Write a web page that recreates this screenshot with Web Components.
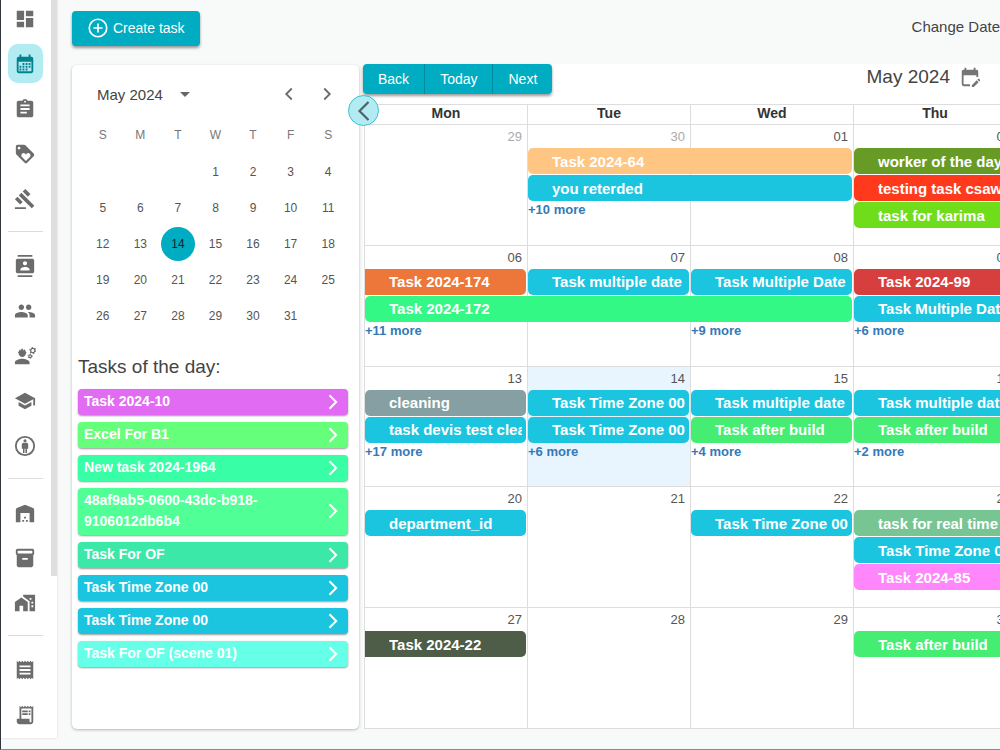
<!DOCTYPE html>
<html lang="en">
<head>
<meta charset="utf-8">
<title>Tasks calendar</title>
<style>
html, body { margin: 0; height: 100%; }
body { font-family: "Liberation Sans", Arial, sans-serif; color: #444; background: #f8fafa; overflow: hidden; }
</style>
</head>
<body>
<app-shell>
  <side-nav slot="nav"></side-nav>
  <top-bar slot="top"></top-bar>
  <day-panel slot="panel"></day-panel>
  <month-calendar slot="calendar"></month-calendar>
</app-shell>

<script>
const define = (name, html, setup) => {
  const tpl = document.createElement('template');
  tpl.innerHTML = '<style>*{box-sizing:border-box}button{font:inherit;color:inherit;background:none;border:0;padding:0;cursor:pointer}</style>' + html;
  customElements.define(name, class extends HTMLElement {
    constructor() {
      super();
      this.attachShadow({ mode: 'open' }).append(tpl.content.cloneNode(true));
    }
    connectedCallback() {
      if (setup && !this.ready) { this.ready = true; setup(this, this.shadowRoot); }
    }
  });
};

const ICONS = {
  dashboard: '<path d="M3 13h8V3H3v10zm0 8h8v-6H3v6zm10 0h8V11h-8v10zm0-18v6h8V3h-8z"/>',
  calendar: '<path fill-rule="evenodd" d="M19 4h-1V1.500h-2V4H8V1.500H6V4H5a2 2 0 0 0-2 2v14a2 2 0 0 0 2 2h14a2 2 0 0 0 2-2V6a2 2 0 0 0-2-2zm0 16H5V9.500h14z"/><path d="M9.300 11h2v2h-2zM12.700 11h2v2h-2zM16 11h2v2h-2zM6 14h2v2H6zM9.300 14h2v2h-2zM12.700 14h2v2h-2zM16 14h2v2h-2zM6 17h2v2H6zM9.300 17h2v2h-2zM12.700 17h2v2h-2z"/>',
  assignment: '<path d="M19 3h-4.180C14.400 1.840 13.300 1 12 1c-1.300 0-2.400.840-2.820 2H5c-1.100 0-2 .900-2 2v14c0 1.100.900 2 2 2h14c1.100 0 2-.900 2-2V5c0-1.100-.900-2-2-2zm-7 0c.550 0 1 .450 1 1s-.450 1-1 1-1-.450-1-1 .450-1 1-1zm2 14H7v-2h7v2zm3-4H7v-2h10v2zm0-4H7V7h10v2z"/>',
  loyalty: '<path d="m21.410 11.580-9-9C12.050 2.220 11.550 2 11 2H4c-1.100 0-2 .900-2 2v7c0 .550.220 1.050.590 1.420l9 9c.360.360.860.580 1.410.580.550 0 1.050-.220 1.410-.590l7-7c.370-.360.590-.860.590-1.410 0-.550-.230-1.060-.590-1.420zM5.500 7C4.670 7 4 6.330 4 5.500S4.670 4 5.500 4 7 4.670 7 5.500 6.330 7 5.500 7zm11.770 8.270L13 19.540l-4.270-4.270C8.280 14.810 8 14.190 8 13.500c0-1.380 1.120-2.500 2.500-2.500.690 0 1.320.280 1.770.740l.730.720.730-.730c.450-.450 1.080-.730 1.770-.730 1.380 0 2.500 1.120 2.500 2.500 0 .690-.280 1.320-.730 1.770z"/>',
  gavel: '<path d="M1 21h12v2H1zM5.245 8.070l2.830-2.827 14.140 14.142-2.828 2.828zM12.317 1l5.657 5.656-2.830 2.830-5.654-5.660zM3.825 9.485l5.657 5.657-2.828 2.828-5.657-5.657z"/>',
  contacts: '<path d="M20 0H4v2h16V0zM4 24h16v-2H4v2zM20 4H4c-1.100 0-2 .900-2 2v12c0 1.100.900 2 2 2h16c1.100 0 2-.900 2-2V6c0-1.100-.900-2-2-2zm-8 2.750c1.240 0 2.250 1.010 2.250 2.250s-1.010 2.250-2.250 2.250S9.750 10.240 9.750 9 10.760 6.750 12 6.750zM17 17H7v-1.500c0-1.670 3.330-2.500 5-2.500s5 .830 5 2.500V17z"/>',
  group: '<path d="M16 11c1.660 0 2.990-1.340 2.990-3S17.660 5 16 5c-1.660 0-3 1.340-3 3s1.340 3 3 3zm-8 0c1.660 0 2.990-1.340 2.990-3S9.660 5 8 5C6.340 5 5 6.340 5 8s1.340 3 3 3zm0 2c-2.330 0-7 1.170-7 3.500V19h14v-2.500c0-2.330-4.670-3.500-7-3.500zm8 0c-.290 0-.620.020-.970.050 1.160.840 1.970 1.970 1.970 3.450V19h6v-2.500c0-2.330-4.670-3.500-7-3.500z"/>',
  engineering: '<path d="M9 15c-2.670 0-8 1.340-8 4v2h16v-2c0-2.660-5.330-4-8-4zM4.740 9H5c0 2.210 1.790 4 4 4s4-1.790 4-4h.260c.270 0 .490-.220.490-.500s-.220-.500-.490-.500H13c0-1.480-.810-2.750-2-3.450v.950c0 .280-.220.500-.500.500s-.500-.220-.500-.500V4.140a4 4 0 0 0-2 0V5.500c0 .280-.220.500-.500.500S7 5.780 7 5.500v-.950C5.810 5.250 5 6.520 5 8h-.260c-.270 0-.490.220-.490.500s.220.500.490.500z"/><g fill="none" stroke="currentColor"><circle cx="20.500" cy="6" r="2.300" stroke-width="1.300"/><circle cx="20.500" cy="6" r="3.300" stroke-width="1.200" stroke-dasharray="1.500 1.950"/><circle cx="17.600" cy="12.300" r="1.500" stroke-width="1.200"/><circle cx="17.600" cy="12.300" r="2.300" stroke-width=".900" stroke-dasharray="1.100 1.300"/></g>',
  school: '<path d="M5 13.180v4L12 21l7-3.820v-4L12 17l-7-3.820zM12 3 1 9l11 6 9-4.910V17h2V9L12 3z"/>',
  person: '<circle cx="12" cy="12" r="10" fill="none" stroke="currentColor" stroke-width="2"/><circle cx="12" cy="6.200" r="1.700"/><path d="M9.500 8.500h5l1 1.500v5h-1.300v4.500h-1.700V15h-1v4.500H9.800V15H8.500v-5z"/>',
  warehouse: '<path fill-rule="evenodd" d="M2 22V8.350c0-.820.500-1.550 1.260-1.860l8-3.200a2 2 0 0 1 1.480 0l8 3.200C21.500 6.800 22 7.530 22 8.350V22h-5V12H7v10z"/><path d="M11 16h2v2h-2zM9 19.500h2v2H9zM13 19.500h2v2h-2z"/>',
  inventory: '<path d="M20 2H4c-1 0-2 .900-2 2v3.010c0 .720.430 1.340 1 1.690V20c0 1.100 1.100 2 2 2h14c.900 0 2-.900 2-2V8.700c.570-.350 1-.970 1-1.690V4c0-1.100-1-2-2-2zm-5 12H9v-2h6v2zm5-7H4V4h16v3z"/>',
  homework: '<path fill-rule="evenodd" d="M1 11v10h5v-6h4v6h5V11L8 6zM10 3v2l7 5v11h6V3zM17 6.500h2v2h-2zM19 10.500h2v2h-2zM19 14.500h2v2h-2z"/>',
  receipt: '<path d="M18 17H6v-2h12v2zm0-4H6v-2h12v2zm0-4H6V7h12v2zM3 22l1.500-1.500L6 22l1.500-1.500L9 22l1.500-1.500L12 22l1.500-1.500L15 22l1.500-1.500L18 22l1.500-1.500L21 22V2l-1.500 1.500L18 2l-1.500 1.500L15 2l-1.500 1.500L12 2l-1.500 1.500L9 2 7.500 3.500 6 2 4.500 3.500 3 2v20z"/>',
  receiptLong: '<path d="M19.500 3.500 18 2l-1.500 1.500L15 2l-1.500 1.500L12 2l-1.500 1.500L9 2 7.500 3.500 6 2v14H3v3c0 1.660 1.340 3 3 3h12c1.660 0 3-1.340 3-3V2l-1.500 1.500zM19 19c0 .550-.450 1-1 1s-1-.450-1-1v-3H8V5h11v14zM9 7h6v2H9zM16 7h2v2h-2zM9 10h6v2H9zM16 10h2v2h-2z"/>',
  editCalendar: '<path d="M12 22H5a2 2 0 0 1-2-2L3.010 6c0-1.100.880-2 1.990-2h1V2h2v2h8V2h2v2h1c1.100 0 2 .900 2 2v6h-2v-2H5v10h7v2zm10.130-5.010.710-.710c.390-.390.390-1.020 0-1.410l-.710-.710a1 1 0 0 0-1.410 0l-.710.710 2.120 2.120zm-.710.710-5.300 5.300H14v-2.120l5.300-5.300 2.120 2.120z"/>',
  plusCircle: '<g fill="none" stroke="currentColor" stroke-width="2"><circle cx="12" cy="12" r="10.500"/><path d="M12 6.500v11M6.500 12h11"/></g>',
  left: '<path fill="none" stroke="currentColor" stroke-width="2" d="m15 6-6 6 6 6"/>',
  right: '<path fill="none" stroke="currentColor" stroke-width="2" d="m9 6 6 6-6 6"/>',
  bigLeft: '<path fill="none" stroke="currentColor" stroke-width="2.200" d="m16.500 3-9 9 9 9"/>',
  bigRight: '<path fill="none" stroke="currentColor" stroke-width="2.500" d="m9 4 8 8-8 8"/>',
  down: '<path d="m7 10 5 5 5-5z"/>'
};

/* ui-icon: name picks the glyph, --size sets its box */
define('ui-icon', '<style>:host{display:block;flex:none;width:var(--size,24px);height:var(--size,24px)}svg{display:block;width:100%;height:100%;fill:currentColor}</style><svg viewBox="0 0 24 24" aria-hidden="true"></svg>',
  (el, root) => { root.querySelector('svg').innerHTML = ICONS[el.getAttribute('name')]; });

define('app-shell', `<style>
:host{display:grid;grid-template-columns:auto minmax(0,1fr);height:100vh;box-sizing:border-box;border-left:1px solid #30353b;border-bottom:1px solid #858b8e;overflow:hidden}
main{display:grid;grid-template-rows:64px minmax(0,1fr);min-width:0;padding:0 0 20px 15px}
section{display:grid;grid-template-columns:287px minmax(0,1fr);gap:4px;min-height:0}
</style><slot name="nav"></slot><main><slot name="top"></slot><section><slot name="panel"></slot><slot name="calendar"></slot></section></main>`);

define('nav-item', `<style>
:host{display:block}
a{display:flex;align-items:center;justify-content:center;width:35px;height:39px;padding-right:2px;border-radius:10px;color:#6c6c6c}
:host([active]) a{background:#b2ebf2;color:#00838f}
ui-icon{--size:22px}
</style><a href="#"></a>`, (el, root) => {
  const name = el.getAttribute('icon'), link = root.querySelector('a');
  link.innerHTML = `<ui-icon name="${name}"></ui-icon>`;
  link.setAttribute('aria-label', name);
});

define('side-nav', `<style>
:host{display:flex;width:56px;margin-bottom:11px;background:#fff;box-shadow:0 0 2px #ccc;overflow:hidden}
nav{flex:1;display:flex;flex-direction:column;gap:6px;margin-top:-1px;padding-left:7px}
hr{width:35px;height:1px;margin:7px 0 8px;border:0;background:#dcdcdc;flex:none}
i{width:6px;height:78%;background:#dedede}
</style><nav></nav><i></i>`, (el, root) => {
  const groups = [['dashboard', 'calendar', 'assignment', 'loyalty', 'gavel'], ['contacts', 'group', 'engineering', 'school', 'person'], ['warehouse', 'inventory', 'homework'], ['receipt', 'receiptLong']];
  root.querySelector('nav').innerHTML = groups.map(g => g.map(n => `<nav-item icon="${n}"${n === 'calendar' ? ' active' : ''}></nav-item>`).join('')).join('<hr>');
});

define('top-bar', `<style>
:host{display:flex;justify-content:space-between;align-items:flex-start;padding-top:11px}
button{display:flex;align-items:center;gap:5px;height:35px;padding:0 15px 1px 16px;border-radius:4px;background:#00acc1;color:#fff;font-size:14px;box-shadow:0 2px 3px #0006}
ui-icon{--size:20px}
span{font-size:15px;line-height:32px;white-space:nowrap}
</style><button><ui-icon name="plusCircle"></ui-icon>Create task</button><span>Change Date</span>`);

define('mini-calendar', `<style>
:host{display:block;padding:0 6px}
header{display:flex;align-items:center;height:58px;padding:0 1px 0 13px;font-size:15px;color:#444}
.month{display:flex;align-items:center;gap:10px;margin-right:auto}
.arrow{width:38px;display:flex;justify-content:center;color:#6c6c6c}
.arrow ui-icon{--size:22px}
table{width:100%;table-layout:fixed;border-collapse:collapse;font-size:12px}
th{height:31px;padding:0 0 7px;font-weight:400;color:#777}
td{height:36px;padding:0;text-align:center;color:#555}
td button{width:34px;height:34px;border-radius:50%}
td button[aria-current]{background:#00acc1;color:#123}
.month ui-icon{color:#666}
</style><header><button class="month">May 2024<ui-icon name="down"></ui-icon></button><button class="arrow" aria-label="Previous month"><ui-icon name="left"></ui-icon></button><button class="arrow" aria-label="Next month"><ui-icon name="right"></ui-icon></button></header><table><thead><tr></tr></thead><tbody></tbody></table>`, (el, root) => {
  root.querySelector('thead tr').innerHTML = [...'SMTWTFS'].map(d => `<th scope="col">${d}</th>`).join('');
  let html = '';
  for (let w = 0; w < 5; w++) {
    html += '<tr>';
    for (let d = 0; d < 7; d++) {
      const n = w * 7 + d - 2;
      html += '<td>' + (n > 0 && n < 32 ? `<button${n === 14 ? ' aria-current="date"' : ''}>${n}</button>` : '') + '</td>';
    }
    html += '</tr>';
  }
  root.querySelector('tbody').innerHTML = html;
});

define('task-row', `<style>
:host{display:block}
button{display:flex;align-items:center;justify-content:space-between;width:100%;padding:2px 6px 3px;border-radius:4px;background:var(--c);color:#fff;font-size:14px;font-weight:700;line-height:21px;text-align:left;box-shadow:0 1px 2px #0006}
span{max-width:200px}
ui-icon{--size:20px}
</style><button><span><slot></slot></span><ui-icon name="bigRight"></ui-icon></button>`);

define('day-panel', `<style>
:host{display:flex;flex-direction:column;margin-top:1px;padding:0 6px;background:#fff;border-radius:5px;box-shadow:0 1px 3px #0004}
h2{margin:19px 0 8px;font-size:19px;line-height:28px;font-weight:400;color:#444}
div{display:flex;flex-direction:column;gap:7px;padding-right:5px}
</style><mini-calendar></mini-calendar><h2>Tasks of the day:</h2><div></div>`, (el, root) => {
  root.querySelector('div').innerHTML = [['Task 2024-10', '#e26bf3'], ['Excel For B1', '#66ff7c'], ['New task 2024-1964', '#38ffa5'], ['48af9ab5-0600-43dc-b918-9106012db6b4', '#50ff96'], ['Task For OF', '#3ce8a8'], ['Task Time Zone 00', '#1bc5df'], ['Task Time Zone 00', '#1bc5df'], ['Task For OF (scene 01)', '#66ffe8']]
    .map(([t, c]) => `<task-row style="--c:${c}">${t}</task-row>`).join('');
});

define('cal-event', `<style>
:host{display:block;min-width:0;margin:0 1px}
button{display:block;width:100%;height:26px;padding:0 4px 0 24px;border-radius:5px;background:var(--c);color:#fff;font-size:15px;font-weight:700;line-height:25px;text-align:left}
:host([continued]) button{border-radius:0 5px 5px 0}
span{display:block;overflow:hidden;white-space:nowrap}
</style><button><span><slot></slot></span></button>`);

define('cal-week', `<style>
:host{flex:1;display:grid;grid-template-columns:var(--cols);grid-template-rows:22px 26px 26px 26px 1fr;row-gap:1px;min-height:0;border-bottom:1px solid #ddd}
.cell{grid-row:1/-1;border-left:1px solid #ddd}
.today{background:#e8f4fe}
.num{padding:4px 5px 0 0;font-size:13px;line-height:16px;text-align:right;color:#555}
.off{color:#aaa}
a{align-self:start;margin-left:1px;font-size:13px;font-weight:700;line-height:15px;color:#337ab7;text-decoration:none}
</style>`);

define('month-calendar', `<style>
:host{--cols:repeat(4,minmax(163px,1fr));display:flex;flex-direction:column;position:relative;background:#fff;min-width:0}
header{display:flex;justify-content:space-between;align-items:flex-start;height:40px;padding-right:19px}
.group{display:flex;border-radius:4px;box-shadow:0 2px 3px #0006}
.group button{height:30px;padding:0 15px;background:#00acc1;color:#fff;font-size:14px;border-right:1px solid #008a9b}
.group button:first-child{border-radius:4px 0 0 4px}
.group button:last-child{border-radius:0 4px 4px 0;border-right:0}
.title{display:flex;align-items:center;gap:9px;height:26px;font-size:19px}
.title button{color:#757575}
.title ui-icon{--size:22px}
.toggle{position:absolute;left:-15px;top:31px;display:grid;place-items:center;width:31px;height:31px;border:1px solid #3cc3d2;border-radius:50%;background:#b2ebf2;color:#4c6468}
.toggle ui-icon{--size:24px}
.clip{flex:1;display:flex;flex-direction:column;min-height:0;margin-left:1px;overflow:hidden}
.days{display:grid;grid-template-columns:var(--cols);border:solid #ddd;border-width:1px 0}
.days b{height:19px;border-left:1px solid #ddd;font-size:14px;line-height:17px;text-align:center;color:#333}
</style><header><div class="group"><button>Back</button><button>Today</button><button>Next</button></div><div class="title">May 2024<button aria-label="Pick a date"><ui-icon name="editCalendar"></ui-icon></button></div></header>
<div class="clip"><div class="days"><b>Mon</b><b>Tue</b><b>Wed</b><b>Thu</b></div></div>
<button class="toggle" aria-label="Collapse panel"><ui-icon name="bigLeft"></ui-icon></button>`, (el, root) => {
  const cyan = '#1bc5df', green = '#45ee72';
  /* events: column, line, span, label, colour, continued; more: column, count */
  const weeks = [
    { days: ['29', '30', '01', '02'], off: 2, events: [[2, 1, 2, 'Task 2024-64', '#ffc582'], [2, 2, 2, 'you reterded', cyan], [4, 1, 1, 'worker of the day', '#689b26'], [4, 2, 1, 'testing task csaw', '#ff3a1c'], [4, 3, 1, 'task for karima', '#70dd1b']], more: [[2, 10]] },
    { days: ['06', '07', '08', '09'], events: [[1, 1, 1, 'Task 2024-174', '#ed773a', 1], [2, 1, 1, 'Task multiple date', cyan], [3, 1, 1, 'Task Multiple Date', cyan], [4, 1, 1, 'Task 2024-99', '#d73f3e'], [1, 2, 3, 'Task 2024-172', '#33f885'], [4, 2, 1, 'Task Multiple Date', cyan]], more: [[1, 11], [3, 9], [4, 6]] },
    { days: ['13', '14', '15', '16'], today: 2, events: [[1, 1, 1, 'cleaning', '#859fa2'], [2, 1, 1, 'Task Time Zone 00', cyan], [3, 1, 1, 'Task multiple date', cyan], [4, 1, 1, 'Task multiple date', cyan], [1, 2, 1, 'task devis test clean', cyan], [2, 2, 1, 'Task Time Zone 00', cyan], [3, 2, 1, 'Task after build', green], [4, 2, 1, 'Task after build', green]], more: [[1, 17], [2, 6], [3, 4], [4, 2]] },
    { days: ['20', '21', '22', '23'], events: [[1, 1, 1, 'department_id', cyan], [3, 1, 1, 'Task Time Zone 00', cyan], [4, 1, 1, 'task for real time', '#77c593'], [4, 2, 1, 'Task Time Zone 00', cyan], [4, 3, 1, 'Task 2024-85', '#ff86fb']], more: [] },
    { days: ['27', '28', '29', '30'], events: [[1, 1, 1, 'Task 2024-22', '#4d5d48', 1], [4, 1, 1, 'Task after build', green]], more: [] }
  ];
  const clip = root.querySelector('.clip');
  for (const w of weeks) {
    const week = document.createElement('cal-week');
    week.shadowRoot.innerHTML +=
      w.days.map((d, i) => `<div class="cell${w.today === i + 1 ? ' today' : ''}" style="grid-column:${i + 1}"></div><div class="num${i < w.off ? ' off' : ''}" style="grid-area:1/${i + 1}">${d}</div>`).join('') +
      w.events.map(([c, r, s, t, k, cont]) => `<cal-event${cont ? ' continued' : ''} style="--c:${k};grid-area:${r + 1}/${c}/auto/span ${s}">${t}</cal-event>`).join('') +
      w.more.map(([c, n]) => `<a href="#" style="grid-area:4/${c}">+${n} more</a>`).join('');
    clip.append(week);
  }
});
</script>
</body>
</html>
